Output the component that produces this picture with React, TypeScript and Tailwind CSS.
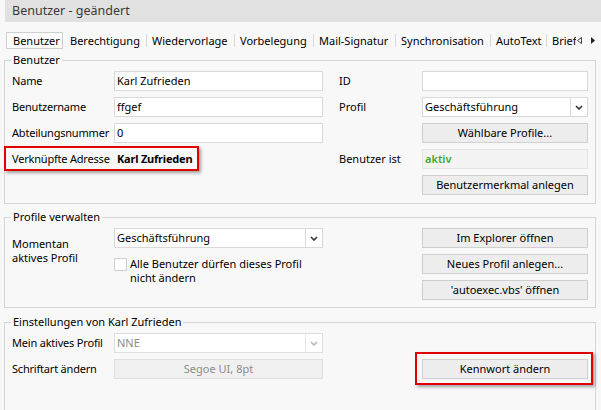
import React from "react";

function Chevron({ disabled }: { disabled?: boolean }) {
	return (
		<svg width="8" height="5" viewBox="0 0 8 5">
			<path
				d="M1 1 L4 4 L7 1"
				fill="none"
				stroke={disabled ? "#b5b5b5" : "#333"}
				strokeWidth="1.6"
			/>
		</svg>
	);
}

function TextInput({ value }: { value: string }) {
	return (
		<div className="h-[20px] w-full border border-[#d9d9d9] bg-white px-[2px] flex items-center whitespace-nowrap">
			{value}
		</div>
	);
}

function Select({ value, disabled }: { value: string; disabled?: boolean }) {
	return (
		<div
			className={`h-[20px] w-full border bg-white flex ${disabled ? "border-[#dedede] text-[#8c8c8c]" : "border-[#d9d9d9]"}`}
		>
			<span className="flex-1 px-[2px] flex items-center whitespace-nowrap">{value}</span>
			<span
				className={`w-[17px] border-l flex items-center justify-center ${disabled ? "border-[#e6e6e6]" : "border-[#d9d9d9]"}`}
			>
				<Chevron disabled={disabled} />
			</span>
		</div>
	);
}

function Button({ children, disabled }: { children: React.ReactNode; disabled?: boolean }) {
	return (
		<div
			className={`h-[20px] w-full border flex items-center justify-center whitespace-nowrap ${disabled ? "bg-[#f0f0f0] border-[#dedede] text-[#8c8c8c]" : "bg-[#ededed] border-[#cfcfcf]"}`}
		>
			{children}
		</div>
	);
}

function LeftRow({ label, children }: { label?: string; children: React.ReactNode }) {
	return (
		<div className="h-[20px] flex items-center">
			<span className="w-[102px] whitespace-nowrap tracking-[-0.2px]">{label}</span>
			<div className="w-[209px]">{children}</div>
		</div>
	);
}

function RightRow({ label, children }: { label?: string; children: React.ReactNode }) {
	return (
		<div className="h-[20px] flex items-center">
			<span className="w-[83px] whitespace-nowrap">{label}</span>
			<div className="w-[166px]">{children}</div>
		</div>
	);
}

function Group({
	title,
	className,
	children,
}: {
	title: string;
	className: string;
	children: React.ReactNode;
}) {
	return (
		<fieldset className={`ml-[4px] mr-[5px] border border-[#d5d5d5] pl-[6px] pr-[7px] pt-[3px] ${className}`}>
			<legend className="px-[2px] leading-[16px] whitespace-nowrap">{title}</legend>
			{children}
		</fieldset>
	);
}

const redBox = "border-2 border-[#e10000] shadow-[2px_2px_3px_rgba(0,0,0,0.35)]";

export default function App() {
	return (
		<div className="w-[601px] h-[410px] overflow-hidden bg-[#f8f8f8] text-[11px] leading-[14px] text-black font-['Noto_Sans',sans-serif]">
			<div className="ml-[5px] h-[22px] bg-[#e1e1e1] pl-[7px] flex items-center text-[12.5px] text-[#3a3a3a]">
				Benutzer - geändert
			</div>

			<div className="mt-[10px] h-[17px] flex items-center">
				<div className="ml-[6px] w-[570px] h-full flex items-center overflow-hidden whitespace-nowrap">
					<div className="w-[57px] h-full shrink-0 border border-[#cfcfcf] bg-white pl-[6px] flex items-center">
						Benutzer
					</div>
					<span className="w-[83px] shrink-0 pl-[7px]">Berechtigung</span>
					<span className="w-px h-[13px] shrink-0 bg-[#d9d9d9]" />
					<span className="w-[87px] shrink-0 pl-[5px]">Wiedervorlage</span>
					<span className="w-px h-[13px] shrink-0 bg-[#d9d9d9]" />
					<span className="w-[78px] shrink-0 pl-[5px]">Vorbelegung</span>
					<span className="w-px h-[13px] shrink-0 bg-[#d9d9d9]" />
					<span className="w-[81px] shrink-0 pl-[5px]">Mail-Signatur</span>
					<span className="w-px h-[13px] shrink-0 bg-[#d9d9d9]" />
					<span className="w-[94px] shrink-0 pl-[5px]">Synchronisation</span>
					<span className="w-px h-[13px] shrink-0 bg-[#d9d9d9]" />
					<span className="w-[55px] shrink-0 pl-[5px]">AutoText</span>
					<span className="w-px h-[13px] shrink-0 bg-[#d9d9d9]" />
					<span className="shrink-0 pl-[5px]">Brief</span>
				</div>
				<div className="flex items-center gap-[9px] pl-[1px]">
					<svg width="5" height="7" viewBox="0 0 5 7">
						<polygon points="4.5,0.5 0.5,3.5 4.5,6.5" fill="#fff" stroke="#444" strokeWidth="1" />
					</svg>
					<svg width="4" height="7" viewBox="0 0 4 7">
						<polygon points="0,0 4,3.5 0,7" fill="#222" />
					</svg>
				</div>
			</div>

			<Group title="Benutzer" className="mt-[3px] pb-[8px]">
				<div className="flex pl-[1px]">
					<div className="w-[311px] flex flex-col gap-[6px]">
						<LeftRow label="Name">
							<TextInput value="Karl Zufrieden" />
						</LeftRow>
						<LeftRow label="Benutzername">
							<TextInput value="ffgef" />
						</LeftRow>
						<LeftRow label="Abteilungsnummer">
							<TextInput value="0" />
						</LeftRow>
						<div className="h-[20px] flex">
							<div className={`-ml-[8px] -mt-[3px] h-[25px] pl-[6px] pr-[5px] flex items-center whitespace-nowrap ${redBox}`}>
								<span className="w-[105px] tracking-[-0.2px]">Verknüpfte Adresse</span>
								<span className="font-bold tracking-[-0.2px]">Karl Zufrieden</span>
							</div>
						</div>
					</div>
					<div className="ml-[16px] w-[249px] flex flex-col gap-[6px]">
						<RightRow label="ID">
							<TextInput value="" />
						</RightRow>
						<RightRow label="Profil">
							<Select value="Geschäftsführung" />
						</RightRow>
						<RightRow>
							<Button>Wählbare Profile...</Button>
						</RightRow>
						<RightRow label="Benutzer ist">
							<div className="h-[20px] w-full border border-[#e3e3e3] bg-[#f3f3f3] px-[2px] flex items-center font-semibold text-[#3dab26]">
								aktiv
							</div>
						</RightRow>
						<RightRow>
							<Button>Benutzermerkmal anlegen</Button>
						</RightRow>
					</div>
				</div>
			</Group>

			<Group title="Profile verwalten" className="mt-[5px] pb-[7px]">
				<div className="flex pl-[1px]">
					<div className="w-[311px] flex">
						<div className="w-[102px] mt-[9px]">
							Momentan
							<br />
							aktives Profil
						</div>
						<div className="w-[209px]">
							<Select value="Geschäftsführung" />
							<div className="mt-[9px] flex items-start">
								<div className="mt-[1px] w-[13px] h-[13px] shrink-0 border border-[#cfcfcf] bg-white" />
								<span className="ml-[3px] whitespace-nowrap">
									Alle Benutzer dürfen dieses Profil
									<br />
									nicht ändern
								</span>
							</div>
						</div>
					</div>
					<div className="ml-[16px] w-[249px] pl-[83px] flex flex-col gap-[6px]">
						<Button>Im Explorer öffnen</Button>
						<Button>Neues Profil anlegen...</Button>
						<Button>'autoexec.vbs' öffnen</Button>
					</div>
				</div>
			</Group>

			<Group title="Einstellungen von Karl Zufrieden" className="mt-[6px] pb-[28px]">
				<div className="flex pl-[1px]">
					<div className="w-[311px] flex flex-col gap-[6px]">
						<LeftRow label="Mein aktives Profil">
							<Select value="NNE" disabled />
						</LeftRow>
						<LeftRow label="Schriftart ändern">
							<Button disabled>Segoe UI, 8pt</Button>
						</LeftRow>
					</div>
					<div className="ml-[16px] w-[249px] pl-[83px] pt-[26px]">
						<div className={`-ml-[7px] -mr-[5px] -mt-[7px] pl-[5px] pr-[3px] pt-[5px] pb-[4px] ${redBox}`}>
							<Button>Kennwort ändern</Button>
						</div>
					</div>
				</div>
			</Group>
		</div>
	);
}
